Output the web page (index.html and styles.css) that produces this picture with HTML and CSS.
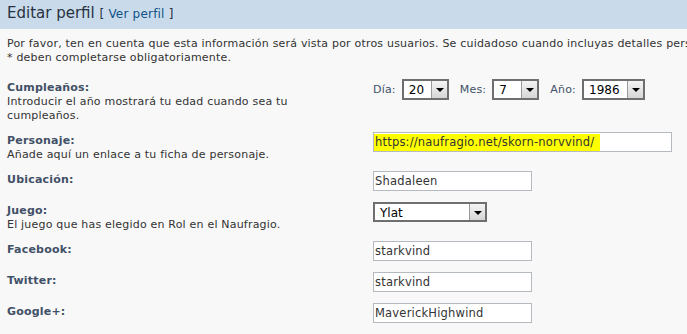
FILE: index.html
```html
<!DOCTYPE html>
<html>
<head>
  <meta charset="utf-8">
  <link rel="stylesheet" href="styles.css">
</head>
<body>
  <div class="panel">
    <h2 class="panel-title">Editar perfil <span class="sub">[ <a href="#">Ver perfil</a> ]</span></h2>

    <div class="inner">
      <p class="intro">Por favor, ten en cuenta que esta información será vista por otros usuarios. Se cuidadoso cuando incluyas detalles personales.<br>* deben completarse obligatoriamente.</p>

      <dl class="row">
        <dt><label>Cumpleaños:</label><span class="explain">Introducir el año mostrará tu edad cuando sea tu cumpleaños.</span></dt>
        <dd class="dates">
          <span class="lbl">Día:</span>
          <div class="select s-day"><span class="val">20</span><span class="arrow"></span></div>
          <span class="lbl">Mes:</span>
          <div class="select s-month"><span class="val">7</span><span class="arrow"></span></div>
          <span class="lbl">Año:</span>
          <div class="select s-year"><span class="val">1986</span><span class="arrow"></span></div>
        </dd>
      </dl>

      <dl class="row">
        <dt><label>Personaje:</label><span class="explain">Añade aquí un enlace a tu ficha de personaje.</span></dt>
        <dd><div class="input wide"><span class="mark">https://naufragio.net/skorn-norvvind/</span></div></dd>
      </dl>

      <dl class="row">
        <dt><label>Ubicación:</label></dt>
        <dd><div class="input">Shadaleen</div></dd>
      </dl>

      <dl class="row">
        <dt><label>Juego:</label><span class="explain">El juego que has elegido en Rol en el Naufragio.</span></dt>
        <dd><div class="select s-game"><span class="val">Ylat</span><span class="arrow"></span></div></dd>
      </dl>

      <dl class="row">
        <dt><label>Facebook:</label></dt>
        <dd><div class="input">starkvind</div></dd>
      </dl>

      <dl class="row">
        <dt><label>Twitter:</label></dt>
        <dd><div class="input">starkvind</div></dd>
      </dl>

      <dl class="row">
        <dt><label>Google+:</label></dt>
        <dd><div class="input">MaverickHighwind</div></dd>
      </dl>
    </div>
  </div>
</body>
</html>
```

FILE: styles.css
```css
* {
    padding: 0px;
    margin: 0px;
    box-sizing: border-box;
}

body {
    background-color: #f8f8f8;
    font-family: "DejaVu Sans", Verdana, sans-serif;
    font-size: 11px;
    letter-spacing: 0.2px;
    color: #333333;
    overflow: hidden;
}

.panel {
    width: 1000px;
}

.panel-title {
    background-color: #c9dbea;
    height: 29px;
    padding: 4px 7px 0;
    font-weight: normal;
    font-size: 15px;
    letter-spacing: 0;
    color: #28313f;
    white-space: nowrap;
}

.panel-title .sub {
    font-size: 12px;
    letter-spacing: 0.2px;
    color: #28313f;
}

.panel-title a {
    color: #105289;
    text-decoration: none;
}

.inner {
    padding: 8px 7px 0;
}

.intro {
    line-height: 14px;
    white-space: nowrap;
    margin-bottom: 14px;
}

.row {
    display: grid;
    grid-template-columns: 366px 1fr;
    margin-bottom: 10px;
}

.row dt {
    padding-top: 2px;
    margin-bottom: -1px;
    line-height: 14px;
}

.row dt label {
    display: block;
    font-weight: bold;
    color: #425067;
}

.explain {
    display: block;
    width: 320px;
}

.row dd {
    min-height: 21px;
}

.dates {
    display: flex;
    align-items: center;
    height: 21px;
}

.dates .lbl {
    color: #425067;
    margin-right: 6px;
}

.dates .select {
    margin-right: 11px;
}

.select {
    display: flex;
    height: 21px;
    border: 2px solid #6f6f6f;
    background-color: #fff;
    font-size: 12px;
    letter-spacing: 0;
    color: #000;
}

.select .val {
    flex: 1;
    padding: 2px 0 0 5px;
    line-height: 15px;
}

.select .arrow {
    position: relative;
    width: 16px;
    border-left: 1px solid #9a9a9a;
    background: linear-gradient(#f4f4f4, #d6d6d6);
}

.select .arrow::after {
    content: "";
    position: absolute;
    left: 4px;
    top: 7px;
    border-left: 4px solid transparent;
    border-right: 4px solid transparent;
    border-top: 4px solid #000;
}

.s-day,
.s-month {
    width: 47px;
}

.s-year {
    width: 63px;
}

.s-game {
    width: 114px;
    height: 20px;
}

.input {
    width: 159px;
    height: 20px;
    border: 1px solid #b4bac0;
    background-color: #fff;
    padding: 2px 0 0 1px;
    font-size: 11.5px;
    line-height: 15px;
    color: #333;
    white-space: nowrap;
}

.input.wide {
    width: 299px;
}

.mark {
    background-color: #ffff00;
    padding: 1px 6px 2px 0;
    box-shadow: -1px 0 0 #ffff00;
}
```
